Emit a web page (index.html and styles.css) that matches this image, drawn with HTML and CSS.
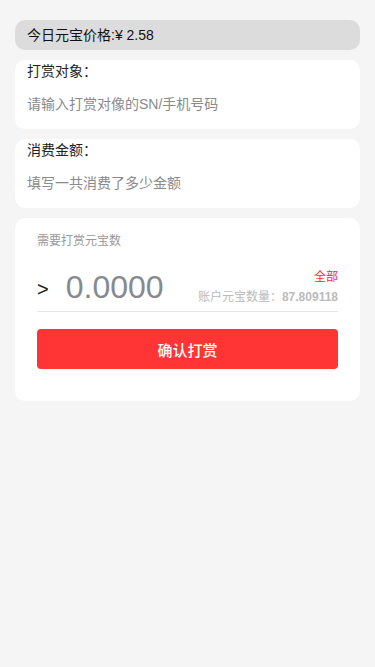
FILE: index.html
```html
<!DOCTYPE html>
<html lang="zh-CN">
<head>
<meta charset="utf-8">
<meta name="viewport" content="width=device-width, initial-scale=1">
<title>打赏</title>
<link rel="stylesheet" href="styles.css">
</head>
<body>
<div class="page">
  <div class="price-bar">今日元宝价格:¥ 2.58</div>

  <div class="field-card">
    <div class="field-label">打赏对象：</div>
    <input class="field-input" type="text" placeholder="请输入打赏对像的SN/手机号码">
  </div>

  <div class="field-card">
    <div class="field-label">消费金额：</div>
    <input class="field-input" type="text" placeholder="填写一共消费了多少金额">
  </div>

  <div class="reward-card">
    <div class="reward-title">需要打赏元宝数</div>
    <div class="amount-row">
      <span class="amount-arrow">&gt;</span>
      <input class="amount-input" type="text" placeholder="0.0000">
      <div class="amount-side">
        <span class="amount-all">全部</span>
        <span class="amount-balance">账户元宝数量：<b class="amount-num">87.809118</b></span>
      </div>
    </div>
    <button class="confirm-btn" type="button">确认打赏</button>
  </div>
</div>
</body>
</html>
```

FILE: styles.css
```css
* { box-sizing: border-box; }

html, body {
  margin: 0;
  padding: 0;
  background: #f5f5f5;
  font-family: "Liberation Sans", Arial, "Noto Sans CJK SC", sans-serif;
  color: #333;
}

.page {
  padding: 20px 15px;
  display: flex;
  flex-direction: column;
  gap: 10px;
}

.price-bar {
  height: 30px;
  line-height: 30px;
  background: #dcdcdc;
  border-radius: 10px;
  padding: 0 12px;
  font-size: 14px;
  color: #111;
}

.field-card {
  background: #fff;
  border-radius: 10px;
  padding: 0 12px;
  height: 69px;
  display: flex;
  flex-direction: column;
}

.field-label {
  font-size: 14px;
  line-height: 20px;
  height: 20px;
  color: #222;
  padding-top: 1px;
}

.field-input {
  border: none;
  outline: none;
  background: transparent;
  padding: 0;
  margin: 0;
  height: 48px;
  font-family: inherit;
  font-size: 14px;
  color: #333;
  width: 100%;
}

.field-input::placeholder { color: #8a8a8a; }

.reward-card {
  background: #fff;
  border-radius: 10px;
  padding: 14px 22px 32px;
  display: flex;
  flex-direction: column;
}

.reward-title {
  font-size: 12px;
  line-height: 18px;
  color: #999;
}

.amount-row {
  display: flex;
  align-items: flex-end;
  border-bottom: 1px solid #e6e6e6;
  margin-top: 17px;
}

.amount-arrow {
  font-size: 20px;
  line-height: 20px;
  color: #222;
  margin-bottom: 12px;
}

.amount-input {
  flex: 1;
  min-width: 0;
  border: none;
  outline: none;
  background: transparent;
  padding: 0;
  margin: 0 0 4px 17px;
  height: 40px;
  font-family: inherit;
  font-size: 32px;
  color: #333;
}

.amount-input::placeholder { color: #858a90; }

.amount-side {
  display: flex;
  flex-direction: column;
  align-items: flex-end;
  margin-bottom: 5px;
}

.amount-all {
  font-size: 12px;
  line-height: 18px;
  color: #ff1f3d;
}

.amount-balance {
  font-size: 12px;
  line-height: 18px;
  color: #bbb;
  margin-top: 2px;
  white-space: nowrap;
}

.amount-num {
  font-weight: 600;
}

.confirm-btn {
  margin-top: 17px;
  height: 40px;
  border: none;
  border-radius: 4px;
  background: #ff3535;
  color: #fff;
  font-family: inherit;
  font-size: 15px;
  font-weight: 500;
}
```
